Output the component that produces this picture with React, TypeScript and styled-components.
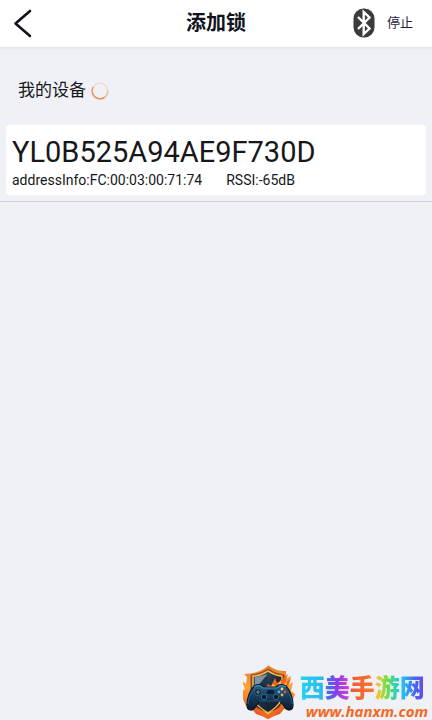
import React from "react";
import styled, { createGlobalStyle } from "styled-components";

const GlobalStyle = createGlobalStyle`
  * { box-sizing: border-box; }
  body {
    margin: 0;
    background: #eff1f6;
    color: #16171b;
    font-family: Roboto, "Noto Sans CJK SC", sans-serif;
  }
`;

const Page = styled.div`
  min-height: 100vh;
  position: relative;
`;

const Header = styled.header`
  display: grid;
  grid-template-columns: 1fr auto 1fr;
  align-items: center;
  height: 47px;
  padding: 0 12px 2px;
  background: #fff;
  box-shadow: 0 1px 3px #dcdee4;
`;

const PlainButton = styled.button`
  display: flex;
  align-items: center;
  padding: 0;
  border: 0;
  background: none;
  font: inherit;
  color: #1c2233;
  cursor: pointer;
`;

const Title = styled.h1`
  margin: 0;
  font-size: 20px;
  line-height: 28px;
  font-weight: 700;
  color: #10121c;
`;

const Actions = styled.div`
  display: flex;
  align-items: center;
  justify-content: flex-end;
  gap: 12px;
  padding-right: 7px;
`;

const StopButton = styled(PlainButton)`
  font-size: 13px;
  line-height: 20px;
`;

const SectionHead = styled.div`
  display: flex;
  align-items: center;
  gap: 5px;
  padding: 31px 18px 22px;
`;

const SectionTitle = styled.h2`
  margin: 0;
  font-size: 17px;
  line-height: 25px;
  font-weight: 400;
`;

const DeviceList = styled.ul`
  margin: 0;
  padding: 0;
  list-style: none;
`;

const DeviceItem = styled.li`
  padding: 0 6px 6px;
  border-bottom: 1px solid #d0d2d6;
`;

const DeviceCard = styled.button`
  display: block;
  width: 100%;
  padding: 9px 6px 4px;
  border: 0;
  border-radius: 3px;
  background: #fff;
  font: inherit;
  color: inherit;
  text-align: left;
  cursor: pointer;
`;

const DeviceName = styled.span`
  display: block;
  font-size: 29px;
  line-height: 36px;
`;

const DeviceInfo = styled.span`
  display: flex;
  gap: 24px;
  font-size: 14px;
  line-height: 21px;
`;

const Brand = styled.a`
  position: absolute;
  right: 4px;
  bottom: 0;
  display: flex;
  align-items: flex-end;
  gap: 5px;
  text-decoration: none;
`;

const BrandText = styled.span`
  display: flex;
  flex-direction: column;
`;

const BrandName = styled.span`
  align-self: flex-start;
  font-size: 25px;
  line-height: 28px;
  font-weight: 900;
  color: transparent;
  background: linear-gradient(90deg, #24d2ec 0%, #28bdf2 17%, #426fed 22%, #913be8 30%, #c743d5 38%, #f15a38 42%, #f9782a 58%, #f5c92c 62%, #68df43 70%, #25cfd5 78%, #25b9f3 83%, #4567ee 92%, #7442ea 100%);
  background-clip: text;
  -webkit-background-clip: text;
`;

const BrandSite = styled.span`
  padding-left: 6px;
  font-family: "Open Sans", sans-serif;
  font-size: 15px;
  line-height: 17px;
  font-weight: 700;
  font-style: italic;
  color: #f36a24;
`;

const BackIcon = () => (
  <svg width="22" height="30" viewBox="0 0 22 30" aria-hidden="true">
    <path d="M18 3 3.5 15.5 18 28" fill="none" stroke="#10121c" strokeWidth="2.6" strokeLinecap="round" strokeLinejoin="round" />
  </svg>
);

const BluetoothIcon = () => (
  <svg width="22" height="30" viewBox="0 0 22 30" aria-hidden="true">
    <rect x="0.5" y="0.5" width="21" height="29" rx="10" fill="#3b3b3d" />
    <path d="m5 9 11.5 11.5L10.7 26V4l5.8 5.5L5 21" fill="none" stroke="#fff" strokeWidth="2.4" />
  </svg>
);

const Spinner = () => (
  <svg width="18" height="18" viewBox="0 0 18 18" role="img" aria-label="Scanning">
    <g fill="none" strokeLinecap="round">
      <circle cx="9" cy="9" r="7.8" stroke="#f3d8c9" strokeWidth="1.2" />
      <path d="M16.8 9A7.8 7.8 0 0 1 13 15.7" stroke="#efb58f" strokeWidth="1.2" />
      <path d="M13 15.7A7.8 7.8 0 0 1 2 12.4" stroke="#eb9661" strokeWidth="1.6" />
      <path d="M2 12.4A7.8 7.8 0 0 1 2 5.5" stroke="#e99c6c" strokeWidth="1.6" />
    </g>
  </svg>
);

const ShieldLogo = () => (
  <svg width="52" height="56" viewBox="0 0 52 56" aria-hidden="true">
    <defs>
      <linearGradient id="flame" x1="0" y1="0" x2="0" y2="1">
        <stop offset="0" stopColor="#e07b2c" />
        <stop offset=".4" stopColor="#ffa034" />
        <stop offset="1" stopColor="#e6481e" />
      </linearGradient>
      <linearGradient id="steel" x1="0" y1="0" x2="1" y2="1">
        <stop offset="0" stopColor="#536b7d" />
        <stop offset=".5" stopColor="#1b2c42" />
        <stop offset="1" stopColor="#0b1528" />
      </linearGradient>
      <linearGradient id="pad" x1="0" y1="0" x2="0" y2="1">
        <stop offset="0" stopColor="#2b638c" />
        <stop offset=".45" stopColor="#193c5d" />
        <stop offset="1" stopColor="#0d1b30" />
      </linearGradient>
    </defs>
    <path d="M25 1c6 5 12 6 18 6v8l5-3-2 9 4-3-2 9 4 3-3 8-2 6-6 1-4 5-6 2-6 3-6-3-6-2-4-5-6-3-3-7-1-8 3-2-3-8 4 3 1-7-3-3c9 0 16-2 24-8Z" fill="url(#flame)" />
    <path d="M25 5c6 4 11 5 16 6v18c0 11-7 18-16 23C16 47 8 40 8 29V11c6-1 11-2 17-6Z" fill="url(#steel)" stroke="#a9481d" strokeWidth="1" />
    <path d="M25 7c5 3 9 5 14 5v17c0 10-6 15-14 20-8-5-15-10-15-20V12c5 0 10-2 15-5Z" fill="none" stroke="#ffb23f" strokeWidth="1.5" />
    <path d="M24 10v16H12V13c5-1 8-1 12-3Z" fill="#8195a4" />
    <path d="m12 25 12-14v16H12Z" fill="#20354c" />
    <path d="m21 27 4-7 3 2 4-8 2 5 3-2 8-7-3 9 6-4-4 9 4 6H21Z" fill="#f1641d" />
    <path d="m25 27 5-7 3 3 5-7v6l6-4-2 6 3-2-2 7Z" fill="#ffc24a" />
    <path d="M11 22c4-2 7-2 10 1h12c3-3 6-3 10-1 4 4 7 12 7 19 0 6-6 7-9 1l-4-5H17l-4 5c-3 6-9 5-9-1 0-7 3-15 7-19Z" fill="url(#pad)" stroke="#091626" strokeWidth="1.2" />
    <path d="M11 23c4-2 7-2 9 1h14c3-3 5-3 9-1" fill="none" stroke="#398ac1" strokeWidth="1.2" />
    <path d="M5 40c0-5 2-9 4-12m40 12c0-5-2-9-4-12M16 37h22" fill="none" stroke="#1d6596" />
    <circle cx="15" cy="28" r="3.5" fill="#0b1c30" stroke="#35678c" />
    <path d="M15 26v4m-2-2h4" stroke="#668dab" strokeWidth="1.2" />
    <circle cx="21" cy="33" r="2.7" fill="#0a1829" stroke="#386789" />
    <circle cx="33" cy="33" r="2.7" fill="#0a1829" stroke="#386789" />
    <rect x="24" y="26" width="7" height="4" rx="1" fill="#0c2139" />
    <circle cx="39" cy="25" r="1.4" fill="#ffda4c" />
    <circle cx="36" cy="28" r="1.4" fill="#43b8dc" />
    <circle cx="42" cy="28" r="1.4" fill="#f44d31" />
    <circle cx="39" cy="31" r="1.4" fill="#f6a84d" />
    <path d="m14 43 11 8 11-8-4 8-7 4-7-4Z" fill="#f36624" />
    <path d="m18 46 7 5 7-5-7 3Z" fill="#ffb23f" />
  </svg>
);

const devices = [
  { name: "YL0B525A94AE9F730D", address: "FC:00:03:00:71:74", rssi: "-65dB" },
];

export default function App() {
  return (
    <Page>
      <GlobalStyle />
      <Header>
        <PlainButton type="button" aria-label="返回"><BackIcon /></PlainButton>
        <Title>添加锁</Title>
        <Actions>
          <BluetoothIcon />
          <StopButton type="button">停止</StopButton>
        </Actions>
      </Header>
      <main>
        <SectionHead>
          <SectionTitle>我的设备</SectionTitle>
          <Spinner />
        </SectionHead>
        <DeviceList>
          {devices.map((device) => (
            <DeviceItem key={device.address}>
              <DeviceCard type="button">
                <DeviceName>{device.name}</DeviceName>
                <DeviceInfo>
                  <span>addressInfo:{device.address}</span>
                  <span>RSSI:{device.rssi}</span>
                </DeviceInfo>
              </DeviceCard>
            </DeviceItem>
          ))}
        </DeviceList>
      </main>
      <Brand href="#">
        <ShieldLogo />
        <BrandText>
          <BrandName>西美手游网</BrandName>
          <BrandSite>www.hanxm.com</BrandSite>
        </BrandText>
      </Brand>
    </Page>
  );
}
